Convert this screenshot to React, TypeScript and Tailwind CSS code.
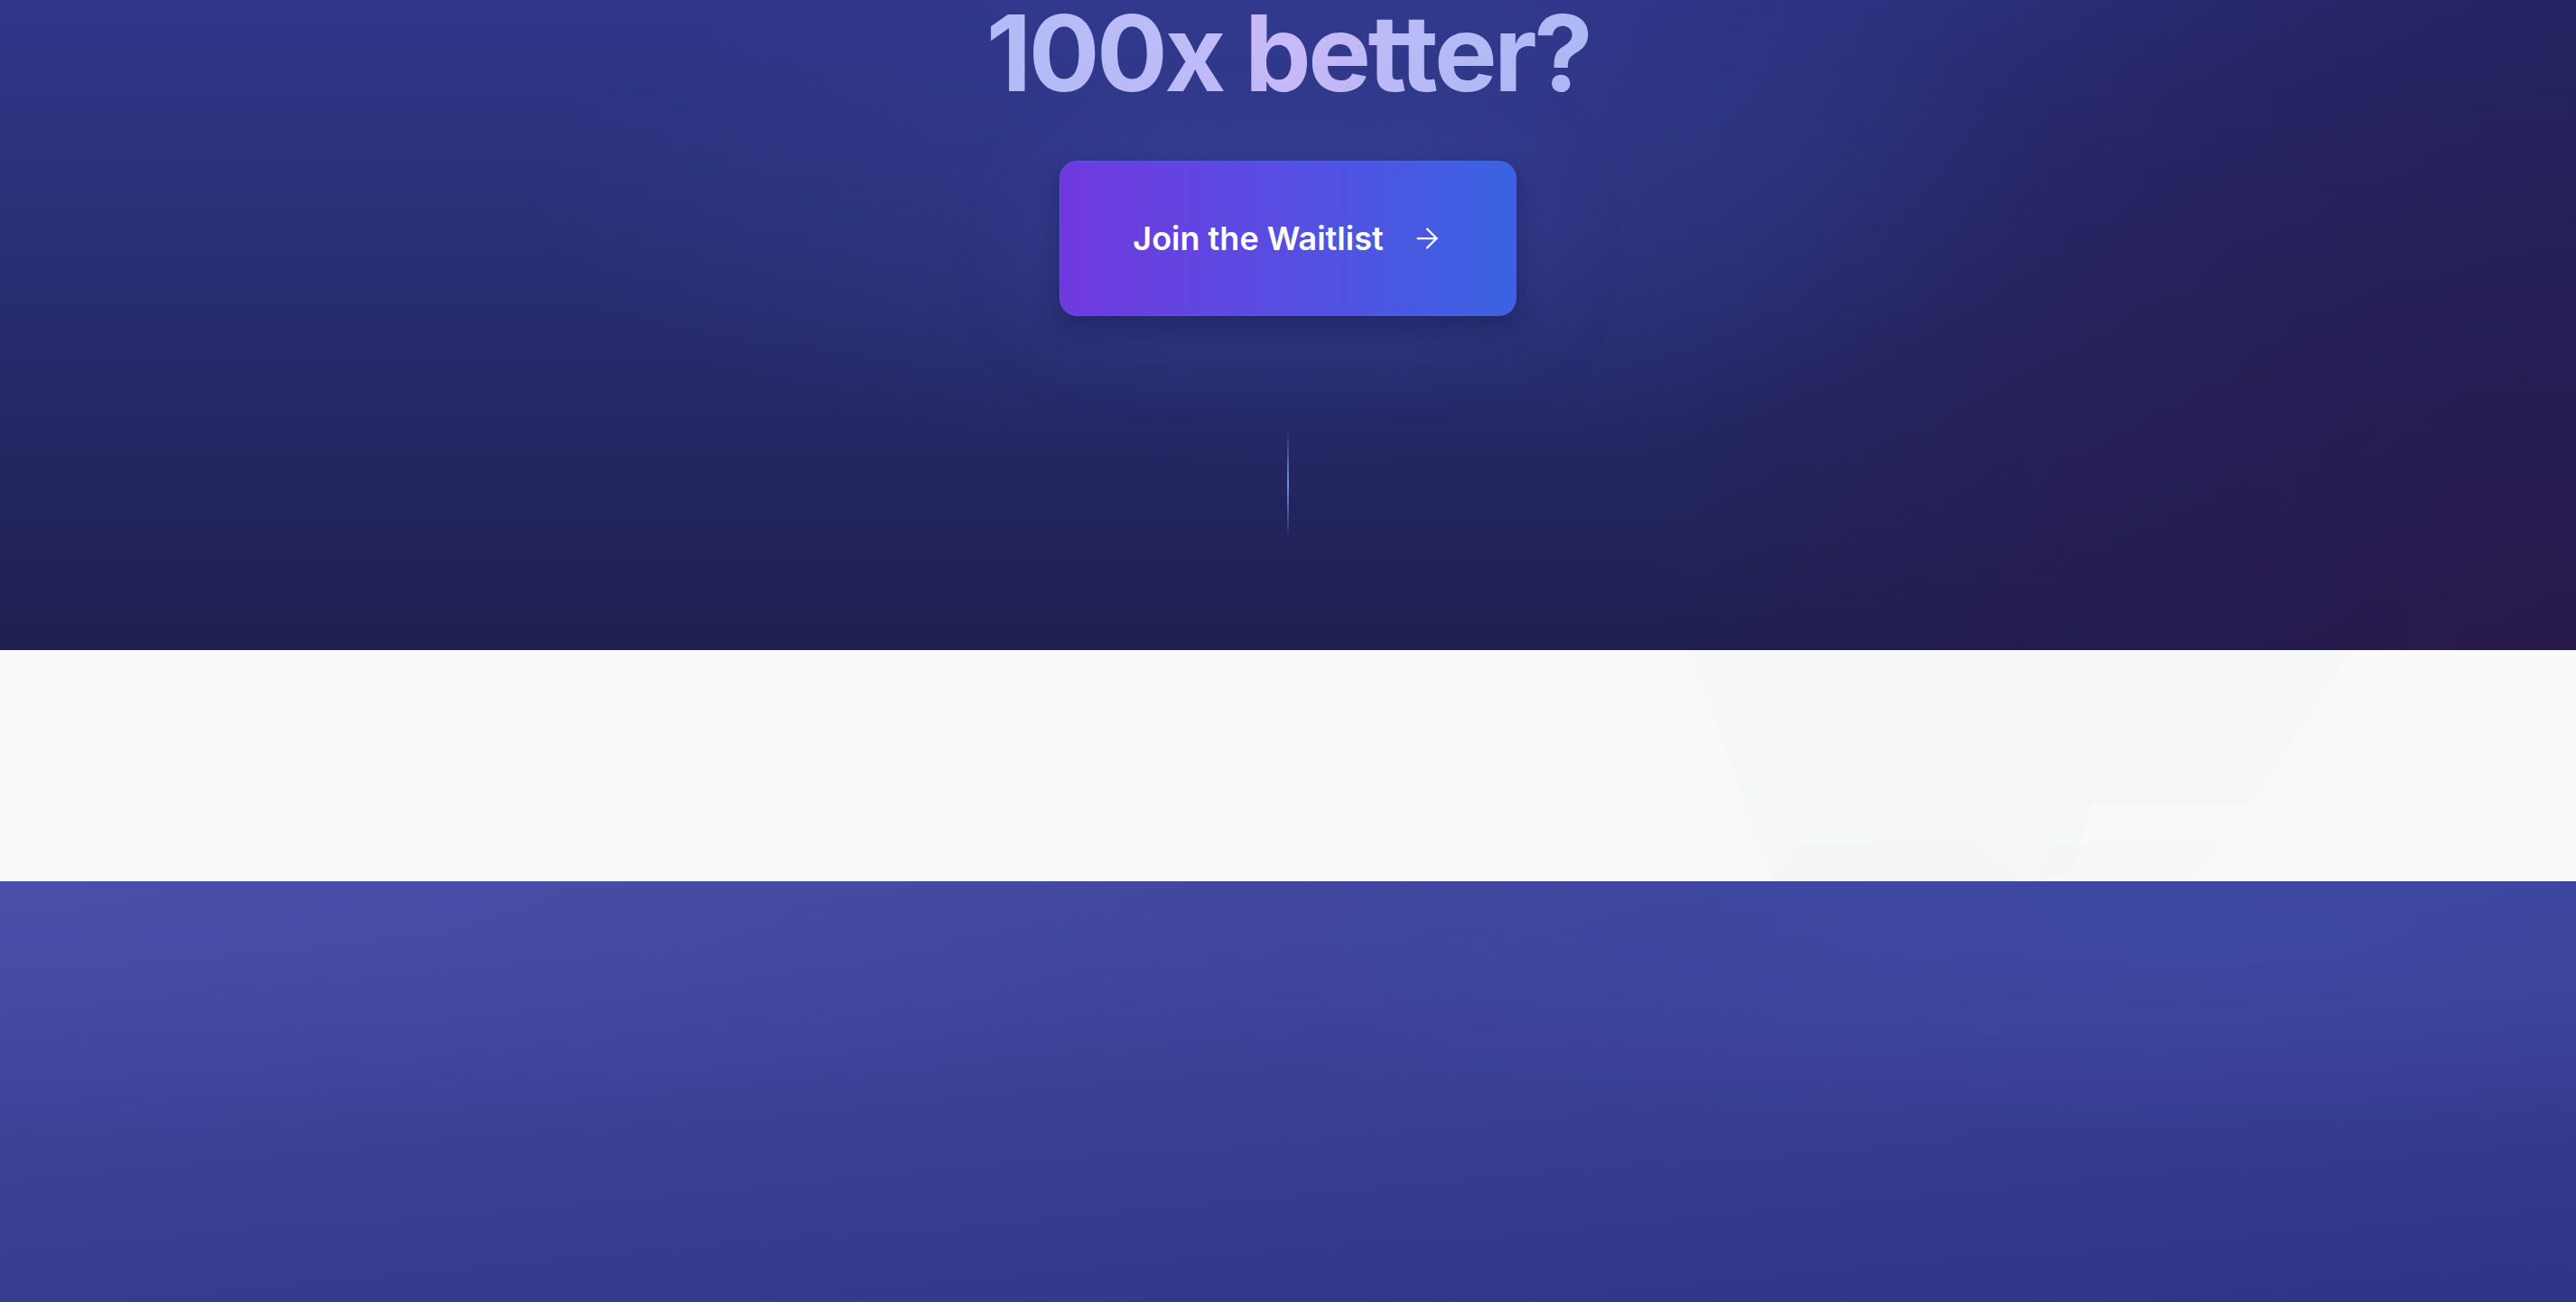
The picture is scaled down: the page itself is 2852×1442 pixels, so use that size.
import React from 'react';
import { ArrowRight } from 'lucide-react';

const HexPattern = () => (
  <svg
    className="absolute right-[150px] top-0 h-full w-[1000px]"
    viewBox="0 0 1000 256"
    fill="none"
  >
    <g fill="#eceef5" fillOpacity="0.14">
      <polygon points="170,0 470,0 600,370 300,370" />
      <polygon points="440,0 670,0 590,250 360,250" />
      <polygon points="660,0 900,0 790,170 530,170" />
    </g>
    <g fill="#eceef5" fillOpacity="0.1">
      <polygon points="290,215 480,215 530,256 260,256" />
      <polygon points="570,215 760,215 720,256 550,256" />
    </g>
  </svg>
);

const App: React.FC = () => {
  return (
    <div className="w-full min-h-screen font-['Inter',sans-serif]">
      {/* Hero / CTA */}
      <section className="relative h-[720px] overflow-hidden bg-[radial-gradient(ellipse_at_50%_30%,rgba(62,78,172,0.32),transparent_42%),radial-gradient(circle_at_100%_0%,rgba(28,28,82,0.55),transparent_40%),radial-gradient(circle_at_100%_100%,rgba(44,24,74,1),transparent_35%),linear-gradient(180deg,#30378a_0%,#282d70_45%,#1e1f50_100%)]">
        <div className="flex flex-col items-center">
          <h1 className="text-[117px] leading-none font-bold tracking-[-0.03em] bg-[linear-gradient(90deg,#b2bbf6_0%,#bdbcf8_30%,#c9b9f8_50%,#b9bbf6_70%,#acb9f4_100%)] bg-clip-text text-transparent">
            100x better?
          </h1>

          <button className="mt-[61px] flex h-[172px] w-[506px] items-center justify-center gap-[30px] rounded-[20px] border border-[#3f6ce4]/60 bg-[linear-gradient(90deg,#7039df_0%,#5a4ce2_45%,#3a63e1_100%)] shadow-[0_12px_30px_rgba(10,10,50,0.35),0_0_120px_rgba(90,100,220,0.22)]">
            <span className="text-[36px] font-semibold text-white">Join the Waitlist</span>
            <ArrowRight size={36} strokeWidth={1.5} className="text-white" />
          </button>

          <div className="mt-[126px] h-[120px] w-[2px] bg-gradient-to-b from-transparent via-[#6f8fe8] to-transparent" />
        </div>
      </section>

      {/* Light band */}
      <section className="relative h-[256px] overflow-hidden bg-[#f9f9f9]">
        <HexPattern />
      </section>

      {/* Lower panel */}
      <section className="h-[466px] bg-[radial-gradient(ellipse_at_85%_10%,rgba(62,76,170,0.7),transparent_40%),radial-gradient(ellipse_at_0%_0%,rgba(78,80,172,0.8),transparent_45%),linear-gradient(175deg,#43489f_0%,#3a3f93_50%,#2f3486_100%)]" />
    </div>
  );
};

export default App;
